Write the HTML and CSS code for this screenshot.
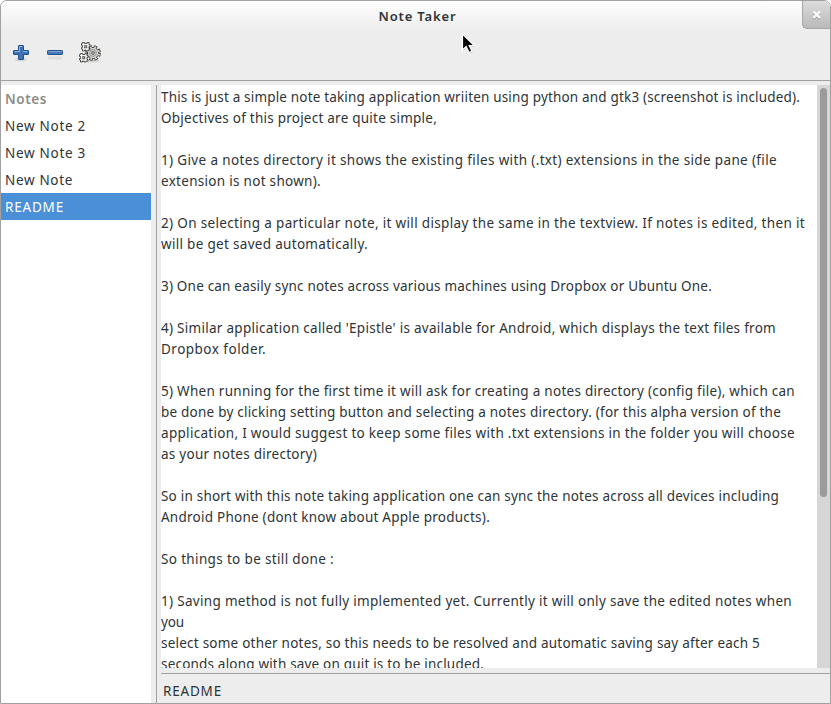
FILE: index.html
```
<!DOCTYPE html>
<html lang="en">
<head>
<meta charset="utf-8">
<title>Note Taker</title>
<link rel="stylesheet" href="styles.css">
</head>
<body>
<div class="window">
  <header class="titlebar">
    <h1 data-width="78">Note Taker</h1>
    <button class="close" aria-label="Close">
      <svg width="10" height="10" viewBox="0 0 10 10"><path d="M1.5 2.5 7.8 8.8M7.8 2.5 1.5 8.8" stroke="#999" stroke-width="2.4"/><path d="M1.5 1.5 8 8M8 1.5 1.5 8" stroke="#fff" stroke-width="2.3"/></svg>
    </button>
  </header>
  <div class="toolbar">
    <svg width="20" height="24" viewBox="0 0 20 24">
      <ellipse cx="10" cy="18.500" rx="6" ry="2" fill="#d8d8d8"/>
      <path d="M8 4.500h4q.5 0 .5.5v4.500h4.500q.5 0 .5.500v3q0 .5-.5.5h-4.500v4.500q0 .5-.5.5H8q-.5 0-.5-.5v-4.500H3q-.5 0-.5-.5v-3q0-.5.5-.5h4.500V5q0-.5.5-.5z" fill="#3f73b5" stroke="#214f8b"/>
      <path d="M8.500 10.500V5.500h3M3.500 10.500h5M12 10.500h4.500" fill="none" stroke="#8db3df"/>
    </svg>
    <svg width="20" height="24" viewBox="0 0 20 24">
      <rect x="3" y="15.500" width="14" height="3" rx="1" fill="#dcdcdc"/>
      <rect x="2.500" y="9.500" width="15" height="4" rx=".8" fill="#4679b8" stroke="#214f8b"/>
      <path d="M3.500 10.500h13" stroke="#7ba5d5"/>
    </svg>
    <svg class="gears" width="24" height="24" viewBox="0 0 24 24">
      <ellipse cx="13" cy="20" rx="9" ry="1.500" fill="#d3d3d3"/>
      <g fill="none">
        <circle cx="15" cy="12" r="6.200" stroke="#4b4d49" stroke-width="3.400" stroke-dasharray="3.200 1.670"/>
        <circle cx="15" cy="12" r="5.600" fill="#dcdcd8" stroke="#4b4d49"/>
        <circle cx="15" cy="12" r="6" stroke="#dcdcd8" stroke-width="2" stroke-dasharray="1.600 3.112" stroke-dashoffset="-.8"/>
        <circle cx="15" cy="12" r="3.500" fill="#c4c5c1" stroke="#9b9c98"/>
        <circle cx="15" cy="12" r="1.300" fill="#eee" stroke="#555"/>
      </g>
      <g id="small-gear">
        <path d="M4.500 1.500h2v1h2.500v-1h2v2h1v2h-1v2h1v1.500h-2v1h-2v-1h-1.500v1h-2v-2h-1v-1.500h1v-2h-1v-2h1z" fill="#f5f5f3" stroke="#3f413d" stroke-width=".9"/>
        <rect x="6.700" y="4.700" width="2" height="2" fill="#fff" stroke="#555" stroke-width="1"/>
      </g>
      <use href="#small-gear" x="-2" y="11"/>
    </svg>
  </div>
  <main class="panes">
    <nav class="sidebar">
      <div class="heading"><span data-width="42">Notes</span></div>
      <div class="item"><span data-width="81">New Note 2</span></div>
      <div class="item"><span data-width="81">New Note 3</span></div>
      <div class="item"><span data-width="68">New Note</span></div>
      <div class="item selected"><span data-width="59">README</span></div>
    </nav>
    <section class="content">
      <div class="editor">
        <div class="text">
          <p><span data-width="639">This is just a simple note taking application wriiten using python and gtk3 (screenshot is included).</span></p>
          <p><span data-width="276">Objectives of this project are quite simple,</span></p>
          <p></p>
          <p><span data-width="616">1) Give a notes directory it shows the existing files with (.txt) extensions in the side pane (file</span></p>
          <p><span data-width="160">extension is not shown).</span></p>
          <p></p>
          <p><span data-width="644">2) On selecting a particular note, it will display the same in the textview. If notes is edited, then it</span></p>
          <p><span data-width="207">will be get saved automatically.</span></p>
          <p></p>
          <p><span data-width="551">3) One can easily sync notes across various machines using Dropbox or Ubuntu One.</span></p>
          <p></p>
          <p><span data-width="615">4) Similar application called 'Epistle' is available for Android, which displays the text files from</span></p>
          <p><span data-width="105">Dropbox folder.</span></p>
          <p></p>
          <p><span data-width="634">5) When running for the first time it will ask for creating a notes directory (config file), which can</span></p>
          <p><span data-width="620">be done by clicking setting button and selecting a notes directory. (for this alpha version of the</span></p>
          <p><span data-width="634">application, I would suggest to keep some files with .txt extensions in the folder you will choose</span></p>
          <p><span data-width="156">as your notes directory)</span></p>
          <p></p>
          <p><span data-width="618">So in short with this note taking application one can sync the notes across all devices including</span></p>
          <p><span data-width="329">Android Phone (dont know about Apple products).</span></p>
          <p></p>
          <p><span data-width="173">So things to be still done :</span></p>
          <p></p>
          <p><span data-width="631">1) Saving method is not fully implemented yet. Currently it will only save the edited notes when</span></p>
          <p><span data-width="23">you</span></p>
          <p><span data-width="599">select some other notes, so this needs to be resolved and automatic saving say after each 5</span></p>
          <p><span data-width="323">seconds along with save on quit is to be included.</span></p>
        </div>
        <div class="scrollbar"><div class="thumb"></div></div>
      </div>
      <footer class="status"><span data-width="59">README</span></footer>
    </section>
  </main>
  <svg class="cursor" width="16" height="24" viewBox="0 0 16 24">
    <path d="M2.500 2v16l3.700-3.500 3 6 2.800-1.400-2.800-5.600H14z" fill="#888" opacity=".3"/>
    <path d="M1.500 1v16l3.700-3.500 2.800 6 2.900-1.300L8.200 12.500h5z" fill="#000" stroke="#fff" stroke-width="1.200"/>
  </svg>
</div>
<script src="fit.js"></script>
</body>
</html>
```
FILE: styles.css
```
* { box-sizing: border-box; }
html { background: #fff; }
body {
  margin: 0;
  font: 13.5px/21px "Noto Sans", sans-serif;
  color: #2e3436;
}
.window {
  position: relative;
  display: flex;
  flex-direction: column;
  width: 831px;
  height: 704px;
  border: 1px solid #a1a1a1;
  border-radius: 7px 7px 0 0;
  background: #ededed;
  overflow: hidden;
}
span, h1 { white-space: nowrap; }
.titlebar {
  position: relative;
  flex: 0 0 30px;
  display: flex;
  justify-content: center;
  padding-top: 5px;
  background: linear-gradient(#fefefe, #ededed);
}
h1 {
  margin: 0 0 0 4px;
  font-size: 13px;
  font-weight: 600;
  line-height: 21px;
}
.close {
  position: absolute;
  top: 0;
  right: 0;
  width: 28px;
  height: 28px;
  padding: 1px 0 0;
  display: grid;
  place-items: center;
  border: solid #a6a6a6;
  border-width: 0 0 1px 1px;
  border-radius: 0 0 0 5px;
  background: linear-gradient(#dcdcdc, #b9b9b9);
}
.toolbar {
  flex: 0 0 50px;
  display: flex;
  gap: 14px;
  padding: 10px 10px 0;
  border-bottom: 1px solid #a1a1a1;
}
.gears { margin-left: -1px; }
.panes {
  flex: 1;
  min-height: 0;
  display: flex;
  padding-top: 4px;
}
.sidebar { width: 150px; background: #fff; }
.sidebar > div { height: 27px; padding: 4px 4px 2px; }
.sidebar .heading { color: #8b8d89; font-weight: 600; }
.sidebar .selected { background: #4a90d9; color: #fff; }
.content {
  flex: 1;
  min-width: 0;
  display: flex;
  flex-direction: column;
  margin-left: 5px;
  padding-left: 4px;
  border-left: 1px solid #a1a1a1;
}
.editor {
  height: 583px;
  display: flex;
  background: #fff;
  overflow: hidden;
}
.text { flex: 1; min-width: 0; padding-top: 2px; }
p { margin: 0; height: 21px; }
.scrollbar { width: 13px; padding: 3px; background: #d6d6d6; }
.thumb { height: 409px; width: 7px; border-radius: 4px; background: #999b9c; }
.status {
  flex: 1;
  margin-top: 5px;
  padding: 7px 2px 0;
  border-top: 1px solid #a1a1a1;
}
.cursor { position: absolute; left: 460px; top: 32px; }
```
FILE: fit.js
```
document.querySelectorAll("[data-width]").forEach((el) => {
  const natural = el.getBoundingClientRect().width;
  const spacing = (Number(el.dataset.width) - natural) / el.textContent.length;
  el.style.letterSpacing = spacing + "px";
});
```
